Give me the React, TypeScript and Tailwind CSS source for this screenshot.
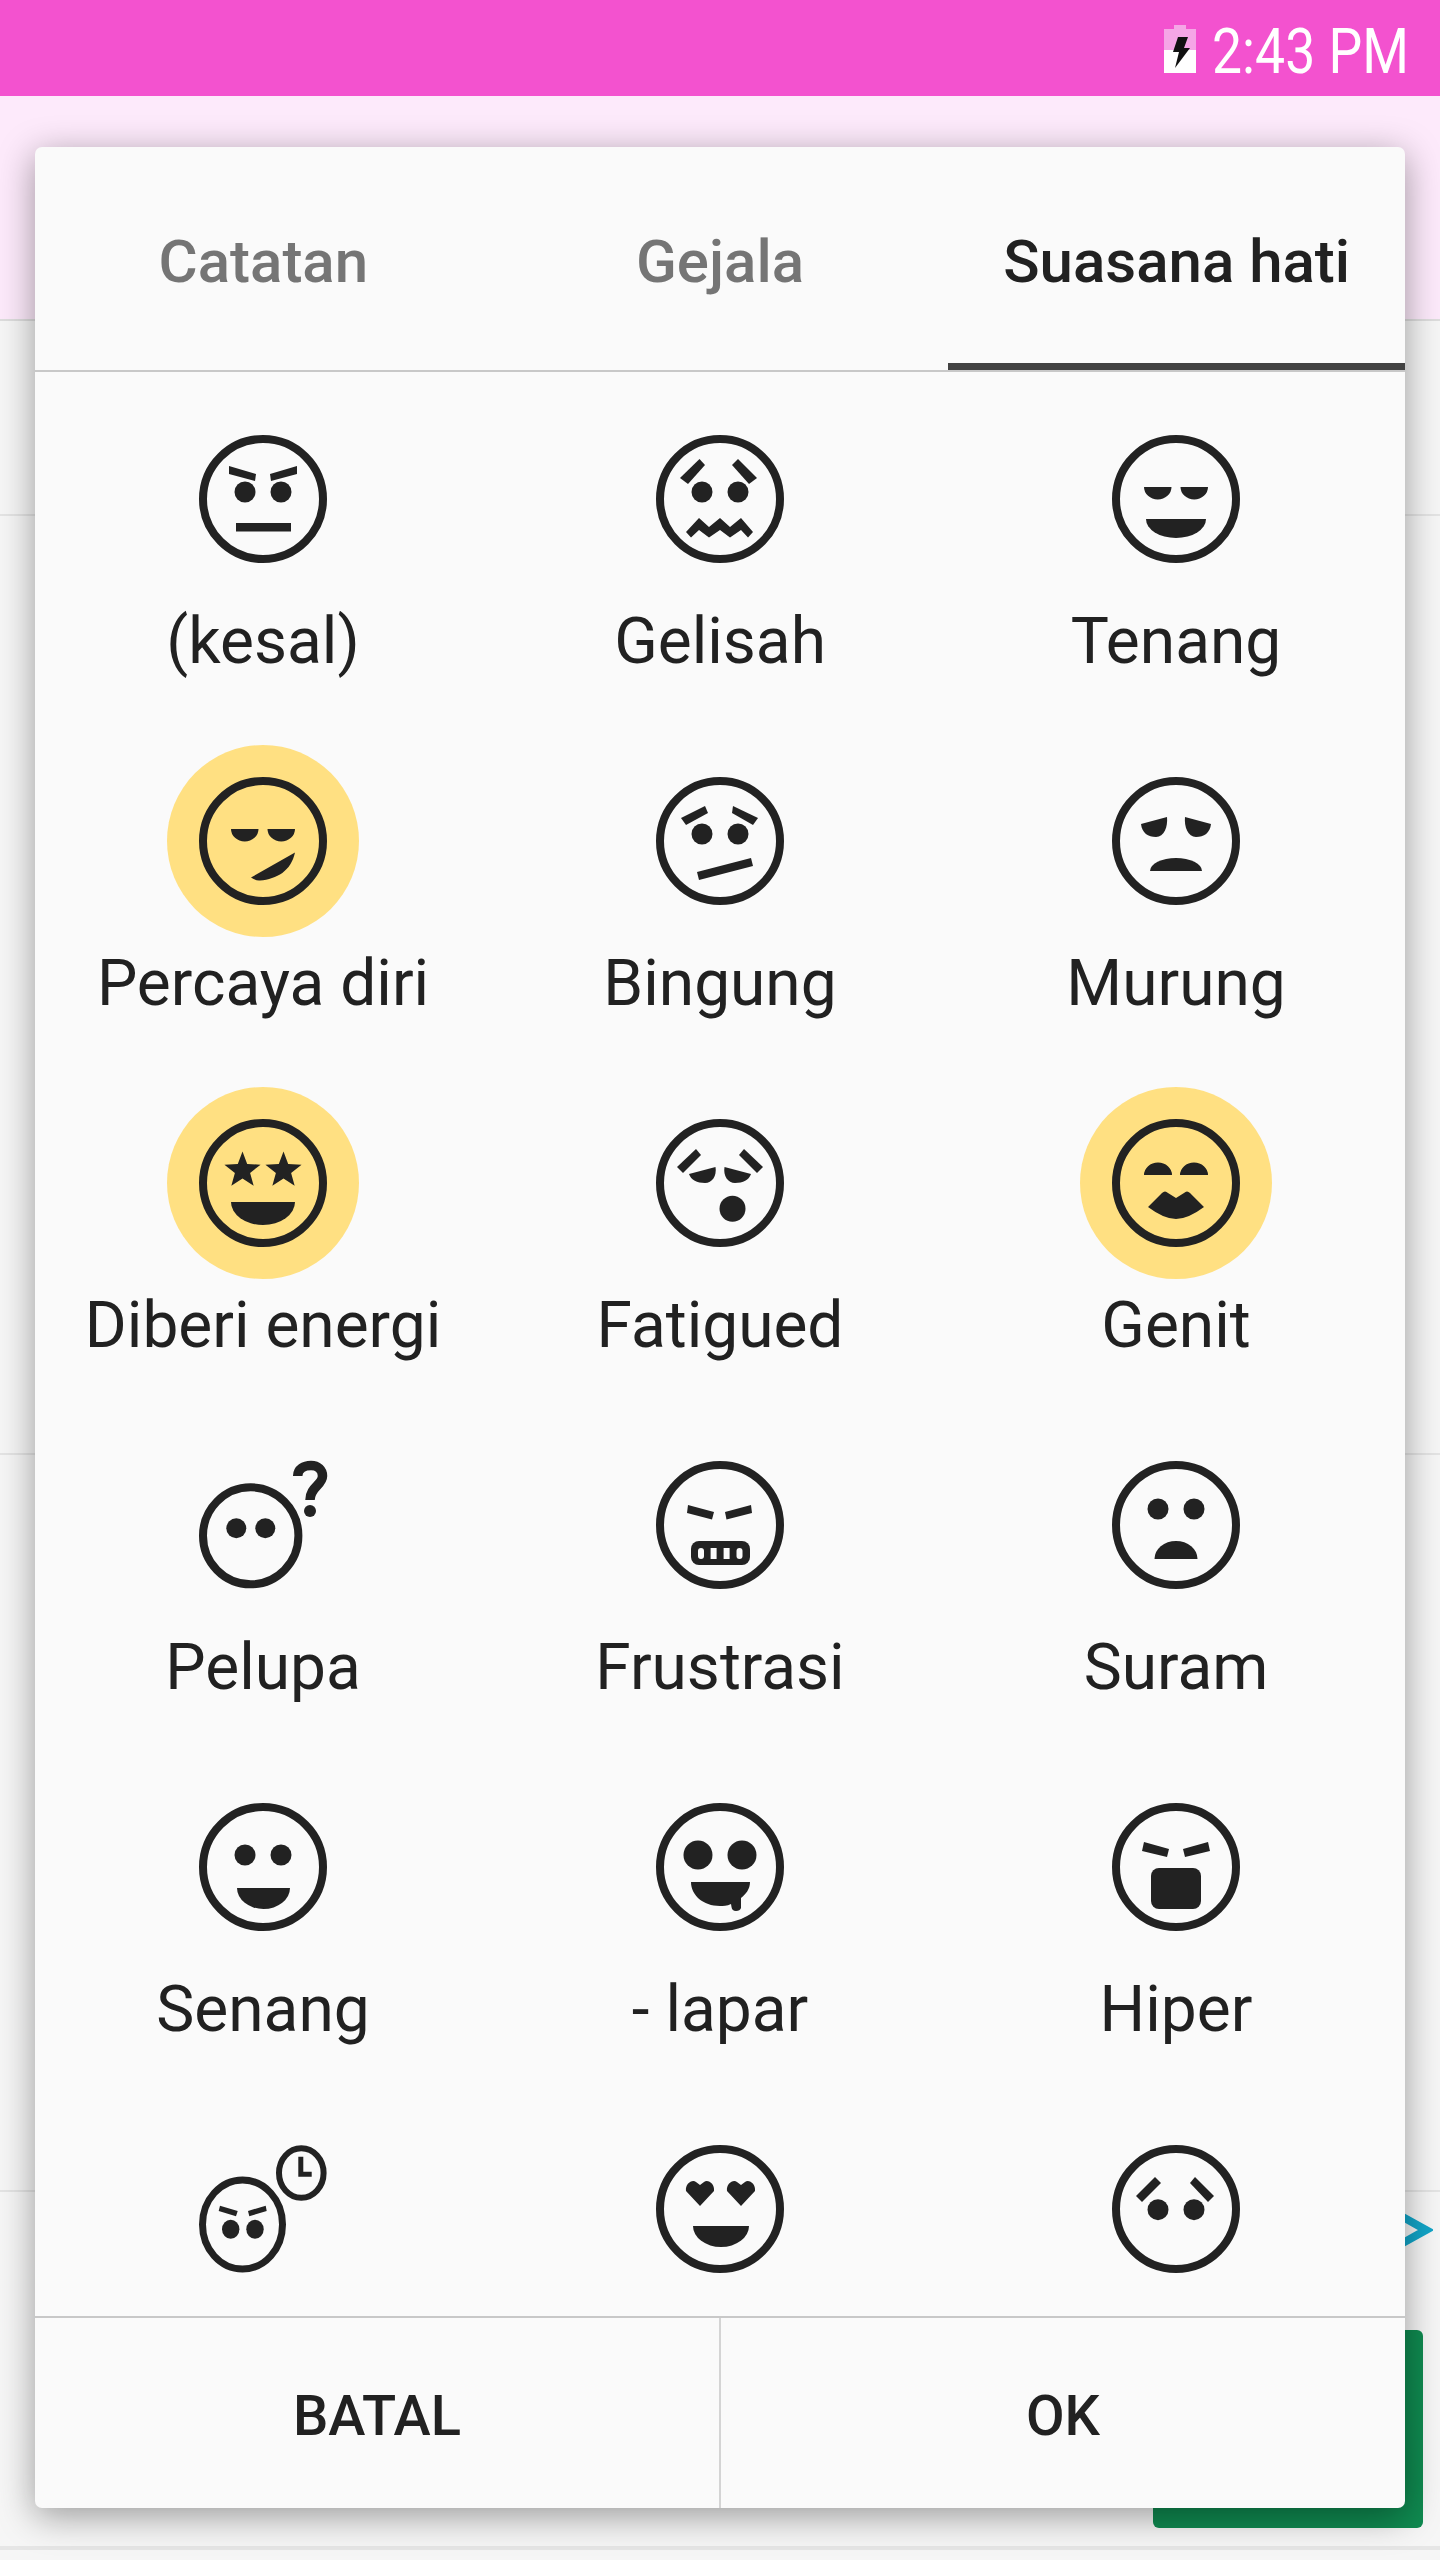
import type { ReactNode } from "react";

const ink = "#222222";

function star(cx: number, cy: number, R: number, r: number) {
  const pts: string[] = [];
  for (let i = 0; i < 10; i++) {
    const rad = i % 2 === 0 ? R : r;
    const a = (Math.PI / 5) * i - Math.PI / 2;
    pts.push(`${cx + rad * Math.cos(a)},${cy + rad * Math.sin(a)}`);
  }
  return pts.join(" ");
}

function heart(x: number) {
  return `M${x} -3 L${x - 14} -18 C${x - 15} -25 ${x - 8} -30 ${x - 4} -27 L${x} -24 L${x + 4} -27 C${x + 8} -30 ${x + 15} -25 ${x + 14} -18 Z`;
}

const Eyes = ({ y = -7 }: { y?: number }) => (
  <>
    <circle cx={-18} cy={y} r={10.5} />
    <circle cx={18} cy={y} r={10.5} />
  </>
);

const Ring = () => <circle r={60} fill="none" stroke={ink} strokeWidth={8} />;

const lids = "M-32 -12 H-4.5 A13.75 12.5 0 0 1 -32 -12 Z M4.5 -12 H32 A13.75 12.5 0 0 1 4.5 -12 Z";

function Face({ children, ring = true, on = false }: { children: ReactNode; ring?: boolean; on?: boolean }) {
  return (
    <div className={on ? "w-[192px] h-[192px] rounded-full bg-[#ffe082]" : "w-[192px] h-[192px] rounded-full"}>
      <svg viewBox="-96 -96 192 192" className="w-[192px] h-[192px]" fill={ink}>
        {ring && <Ring />}
        {children}
      </svg>
    </div>
  );
}

type Mood = { label: string; on?: boolean; ring?: boolean; icon: ReactNode };

const moods: Mood[] = [
  {
    label: "(kesal)",
    icon: (
      <>
        <Eyes />
        <polygon points="-34,-33 -7,-25 -8,-18 -34,-25" />
        <polygon points="34,-33 7,-25 8,-18 34,-25" />
        <rect x={-27} y={24} width={55} height={8.5} />
      </>
    ),
  },
  {
    label: "Gelisah",
    icon: (
      <>
        <Eyes />
        <polygon points="-20.5,-40 -15,-34 -32,-15 -40,-21" />
        <polygon points="15,-40 9,-34 26,-15 34,-21" transform="translate(3 0)" />
        <polygon points="-34,33 -21,19 -11,28 0,19 10,28 21,19 33,33 28,38.5 21,31 10,38.5 0,31 -11,38.5 -21,31 -29,38.5" />
      </>
    ),
  },
  {
    label: "Tenang",
    icon: (
      <>
        <path d={lids} />
        <path d="M-30 20 H30 A30 19 0 0 1 -30 20 Z" />
      </>
    ),
  },
  {
    label: "Percaya diri",
    on: true,
    icon: (
      <>
        <path d={lids} />
        <path d="M32 11.5 L-12 36.5 Q-7 40 -3 39.5 C14 38 28 30 32 11.5 Z" />
      </>
    ),
  },
  {
    label: "Bingung",
    icon: (
      <>
        <Eyes />
        <polygon points="-15,-35 -12,-28 -34,-16 -39,-23" />
        <polygon points="13,-35 12,-28 33,-16 38,-23" />
        <polygon points="-23,31 31,17 33,25 -21,39" />
      </>
    ),
  },
  {
    label: "Murung",
    icon: (
      <>
        <path d="M-35 -17 L-9 -24 C-8 -14 -12 -4 -20 -4 C-28 -4 -34 -8 -35 -17 Z" />
        <path d="M35 -17 L9 -24 C8 -14 12 -4 20 -4 C28 -4 34 -8 35 -17 Z" />
        <path d="M-26 30 H26 A26 13 0 0 0 -26 30 Z" />
      </>
    ),
  },
  {
    label: "Diberi energi",
    on: true,
    icon: (
      <>
        <polygon points={star(-20.5, -12.5, 19, 8)} />
        <polygon points={star(20.5, -12.5, 19, 8)} />
        <path d="M-32 19 H32 A32 23 0 0 1 -32 19 Z" />
      </>
    ),
  },
  {
    label: "Fatigued",
    icon: (
      <>
        <polygon points="-24,-34 -19,-28 -37,-10 -43,-16" />
        <polygon points="24,-34 19,-28 37,-10 43,-16" />
        <path d="M-31 -9 L-4.5 -16 C-3 -7 -8 0 -15 0 C-23 0 -29 -3 -31 -9 Z" />
        <path d="M31 -9 L4.5 -16 C3 -7 8 0 15 0 C23 0 29 -3 31 -9 Z" />
        <circle cx={12.5} cy={25.7} r={13} />
      </>
    ),
  },
  {
    label: "Genit",
    on: true,
    icon: (
      <>
        <path d="M-32 -8 A14 12.5 0 0 1 -4 -8 Z M4 -8 A14 12.5 0 0 1 32 -8 Z" />
        <path d="M-28 24 L-14 10 Q-11 7 -8 10 L0 15 L8 10 Q11 7 14 10 L28 24 Q12 36 0 36 Q-12 36 -28 24 Z" />
      </>
    ),
  },
  {
    label: "Pelupa",
    ring: false,
    icon: (
      <>
        <ellipse cx={-12.3} cy={10.8} rx={47.7} ry={48.5} fill="none" stroke={ink} strokeWidth={8} />
        <circle cx={-26.7} cy={3.3} r={10} />
        <circle cx={2.3} cy={3.3} r={10} />
        <path
          d="M34.7 -49 C34.7 -56 41 -59.5 48 -59.5 C55 -59.5 59.5 -55 59.5 -49 C59.5 -40 47 -38 47 -25"
          fill="none"
          stroke={ink}
          strokeWidth={9.5}
        />
        <circle cx={47} cy={-14} r={6} />
      </>
    ),
  },
  {
    label: "Frustrasi",
    icon: (
      <>
        <polygon points="-32,-20 -6,-13 -8,-5.6 -33,-12" />
        <polygon points="31,-20 5,-13 6.5,-5.6 32,-12" />
        <rect x={-29} y={16} width={59} height={24} rx={8} />
        <g fill="#fafafa">
          <rect x={-22} y={23} width={6} height={11} rx={3} />
          <rect x={-9.4} y={23} width={6} height={11} />
          <rect x={3.6} y={23} width={6} height={11} />
          <rect x={16.5} y={23} width={6} height={11} rx={3} />
        </g>
      </>
    ),
  },
  {
    label: "Suram",
    icon: (
      <>
        <Eyes y={-16} />
        <path d="M-21.5 34 H21.5 A21.5 18 0 0 0 -21.5 34 Z" />
      </>
    ),
  },
  {
    label: "Senang",
    icon: (
      <>
        <Eyes y={-12} />
        <path d="M-26 21 H27 A26.5 21 0 0 1 -26 21 Z" />
      </>
    ),
  },
  {
    label: "- lapar",
    icon: (
      <>
        <circle cx={-22} cy={-12} r={14.5} />
        <circle cx={22} cy={-12} r={14.5} />
        <path d="M-29 15 H30 C30 22 26 27 21 31 L21 41 Q20 44 16 44 Q12 44 11.5 40 L11 37 C7 39 3 39 0 39 C-17 39 -29 28 -29 15 Z" />
      </>
    ),
  },
  {
    label: "Hiper",
    icon: (
      <>
        <polygon points="-32,-25 -7,-18 -9,-10 -34,-16" />
        <polygon points="32,-25 7,-18 9,-10 34,-16" />
        <rect x={-25} y={1} width={50} height={41} rx={8} />
      </>
    ),
  },
  {
    label: "",
    ring: false,
    icon: (
      <>
        <ellipse cx={-20.5} cy={15.5} rx={40} ry={44.5} fill="none" stroke={ink} strokeWidth={7} />
        <ellipse cx={38.3} cy={-36} rx={22.3} ry={24.8} fill="none" stroke={ink} strokeWidth={6} />
        <path d="M35.3 -52.3 H40.3 V-37.3 H48.7 V-32.3 H35.3 Z" />
        <ellipse cx={-32.3} cy={20.3} rx={8.7} ry={9.5} />
        <ellipse cx={-8} cy={20.3} rx={8.7} ry={9.5} />
        <polygon points="-43,-3.3 -25.3,2 -27,7.3 -44.3,2" />
        <polygon points="2.7,-3.3 -15,2 -13.7,7.3 3.7,2" />
      </>
    ),
  },
  {
    label: "",
    icon: (
      <>
        <path d={heart(-20)} />
        <path d={heart(21)} />
        <path d="M-27 17 H29 A28 21 0 0 1 -27 17 Z" />
      </>
    ),
  },
  {
    label: "",
    icon: (
      <>
        <Eyes y={0.7} />
        <polygon points="-21,-32 -15,-26 -34,-7 -40,-13" />
        <polygon points="19,-32 14,-26 32,-7 38,-13" />
      </>
    ),
  },
];

export default function App() {
  return (
    <div className="relative w-[1440px] h-[2560px] overflow-hidden bg-[#f6f6f6] font-['Roboto',sans-serif]">
      {/* status bar */}
      <div className="h-[96px] bg-[#f352cf] flex items-center justify-end pr-[36px]">
        <svg width="32" height="48" viewBox="0 0 32 48" className="mr-[16px] mt-[2px]">
          <path d="M10 0 H22 V4 H32 V25 H0 V4 H10 Z" fill="#f5a6e6" />
          <rect y="25" width="32" height="23" fill="#ffffff" />
          <path d="M14 12 H24 L20 23 H26 L11 43 L15 27 H9 Z" fill="#111111" />
        </svg>
        <span className="text-[63px] leading-none font-normal text-white w-[192px] mt-[6px] whitespace-nowrap scale-x-[0.85] origin-left">
          2:43 PM
        </span>
      </div>

      {/* page behind the dialog */}
      <div className="h-[225px] bg-[#fdeafb] border-b-2 border-[#dddddd]" />
      <div className="h-[195px] border-b-2 border-[#e4e4e4]" />
      <div className="h-[939px] border-b-2 border-[#e4e4e4]" />
      <div className="h-[737px] border-b-2 border-[#e4e4e4]" />
      <div className="h-[358px] border-b-4 border-[#e6e6e6] flex flex-col items-end pt-[21px]">
        <svg width="28" height="34" viewBox="0 0 28 34" className="mr-[7px]">
          <path d="M-4 3 L21 17 L-4 31" fill="none" stroke="#12a5c8" strokeWidth="8" />
        </svg>
        <div className="mt-[83px] mr-[17px] w-[270px] h-[198px] rounded-md bg-[#0f8a50] shrink-0" />
      </div>

      {/* dialog */}
      <div className="absolute left-[35px] top-[147px] w-[1370px] h-[2361px] flex flex-col overflow-hidden rounded-[7px] bg-[#fafafa] shadow-[0_8px_36px_rgba(0,0,0,0.38)]">
        <div className="flex border-b-2 border-[#c8c8c8] text-[60px] font-medium">
          <div className="flex-1 h-[223px] flex items-center justify-center text-[#757575] pt-[6px]">Catatan</div>
          <div className="flex-1 h-[223px] flex items-center justify-center text-[#757575] pt-[6px]">Gejala</div>
          <div className="flex-1 h-[223px] flex items-center justify-center text-[#212121] border-b-[7px] border-[#424242] pt-[13px]">
            Suasana hati
          </div>
        </div>

        <div className="flex-1 overflow-hidden pt-[31px]">
          <div className="grid grid-cols-[456px_458px_454px] auto-rows-[342px]">
            {moods.map((m, i) => (
              <div key={i} className="flex flex-col items-center">
                <Face on={m.on} ring={m.ring !== false}>
                  {m.icon}
                </Face>
                <div className="h-[94px] leading-[94px] text-[64px] text-[#212121] whitespace-nowrap">{m.label}</div>
              </div>
            ))}
          </div>
        </div>

        <div className="flex h-[192px] border-t-2 border-[#c8c8c8] text-[56px] font-medium text-[#212121]">
          <div className="flex-1 flex items-center justify-center border-r-2 border-[#d4d4d4] pt-[6px]">BATAL</div>
          <div className="flex-1 flex items-center justify-center pt-[6px]">OK</div>
        </div>
      </div>
    </div>
  );
}
